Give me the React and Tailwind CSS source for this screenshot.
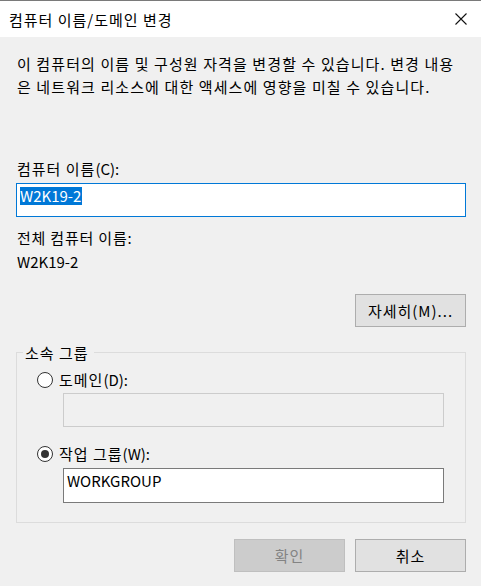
import React from "react";

const Radio = ({ checked }) => (
  <span className="w-[16px] h-[16px] rounded-full border border-[#333333] bg-white flex items-center justify-center shrink-0">
    {checked && <span className="w-[8px] h-[8px] rounded-full bg-[#333333]" />}
  </span>
);

const Button = ({ children, disabled }) => (
  <div
    className={
      disabled
        ? "w-[111px] h-[33px] flex items-center justify-center border border-[#bfbfbf] bg-[#cccccc] text-[#838383] tracking-[1px]"
        : "w-[111px] h-[33px] flex items-center justify-center border border-[#adadad] bg-[#e1e1e1] text-black tracking-[1px]"
    }
  >
    {children}
  </div>
);

export default function App() {
  return (
    <div className="w-[481px] h-[586px] bg-[#f0f0f0] border-t border-[#7a7a7a] font-['Noto_Sans_CJK_KR',sans-serif] text-[15px] leading-[23px] text-black overflow-hidden">
      {/* title bar */}
      <div className="h-[36px] bg-white flex items-center justify-between pl-[9px] pr-[14px]">
        <span className="tracking-[1px]">컴퓨터 이름/도메인 변경</span>
        <svg width="12" height="12" viewBox="0 0 12 12">
          <path d="M0.5 0.5 L11.5 11.5 M11.5 0.5 L0.5 11.5" stroke="#111" strokeWidth="1.1" />
        </svg>
      </div>

      <div className="pl-[16px] pr-[15px] pt-[15px]">
        <p className="pl-[1px] whitespace-nowrap tracking-[1.1px]">
          이 컴퓨터의 이름 및 구성원 자격을 변경할 수 있습니다. 변경 내용
          <br />은 네트워크 리소스에 대한 액세스에 영향을 미칠 수 있습니다.
        </p>

        <div className="mt-[59px] pl-[1px]">
          <span className="tracking-[1px]">컴퓨터 이름</span>(C):
        </div>
        <div className="mt-[3px] h-[34px] border border-[#0078d7] bg-white pl-[3px] pt-[3px] flex items-start">
          <span className="bg-[#0078d7] text-white leading-[18px] pr-[1px]">W2K19-2</span>
        </div>

        <div className="mt-[9px] pl-[1px] tracking-[0.8px]">전체 컴퓨터 이름:</div>
        <div className="mt-[1px] pl-[1px]">W2K19-2</div>

        <div className="mt-[21px] flex justify-end">
          <Button>자세히(M)...</Button>
        </div>

        <fieldset className="mt-[14px] border border-[#dcdcdc] pl-[6px] pr-[21px] pt-[4px] pb-[19px]">
          <legend className="pl-[2px] pr-[5px] tracking-[1px]">소속 그룹</legend>

          <div className="ml-[14px] flex items-center gap-[6px] h-[23px]">
            <Radio />
            <span>
              <span className="tracking-[1px]">도메인</span>(D):
            </span>
          </div>
          <div className="mt-[2px] ml-[40px] h-[34px] border border-[#cccccc] bg-[#f0f0f0]" />

          <div className="mt-[15px] ml-[14px] flex items-center gap-[6px] h-[23px]">
            <Radio checked />
            <span>
              <span className="tracking-[1px]">작업 그룹</span>(W):
            </span>
          </div>
          <div className="mt-[3px] ml-[40px] h-[35px] border border-[#7a7a7a] bg-white pl-[3px]">
            WORKGROUP
          </div>
        </fieldset>

        <div className="mt-[16px] flex justify-end gap-[10px]">
          <Button disabled>확인</Button>
          <Button>취소</Button>
        </div>
      </div>
    </div>
  );
}
